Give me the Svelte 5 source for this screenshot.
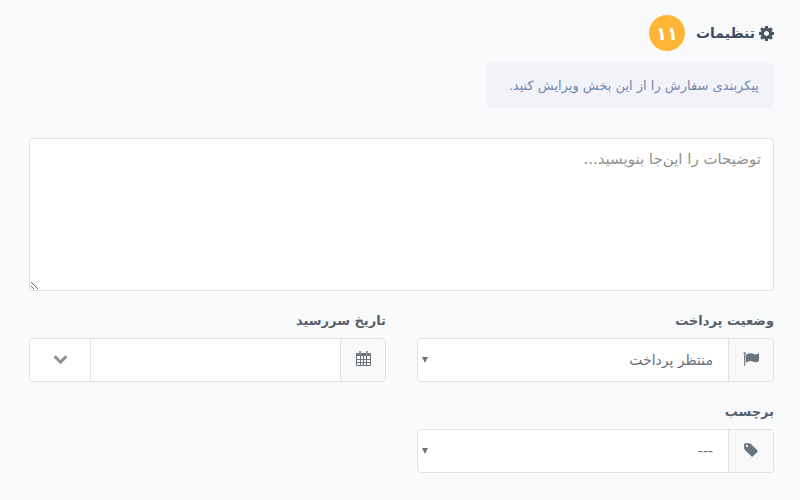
<script lang="ts">
	const icons = {
		cog: {
			box: '128 128 1536 1536',
			d: 'M1152 896q0-106-75-181t-181-75-181 75-75 181 75 181 181 75 181-75 75-181zm512-109v222q0 12-8 23t-20 13l-185 28q-19 54-39 91 35 50 107 138 10 12 10 25t-9 23q-27 37-99 108t-94 71q-12 0-26-9l-138-108q-44 23-91 38-16 136-29 186-7 28-36 28h-222q-14 0-24.5-8.5t-11.5-21.5l-28-184q-49-16-90-37l-141 107q-10 9-25 9-14 0-25-11-126-114-165-168-7-10-7-23 0-12 8-23 15-21 51-66.5t54-70.5q-27-50-41-99l-183-27q-13-2-21-12.5t-8-23.5v-222q0-12 8-23t19-13l186-28q14-46 39-92-40-57-107-138-10-12-10-24 0-10 9-23 26-36 98.5-107.5t94.5-71.5q13 0 26 10l138 107q44-23 91-38 16-136 29-186 7-28 36-28h222q14 0 24.5 8.5t11.5 21.5l28 184q49 16 90 37l142-107q9-9 24-9 13 0 25 10 129 119 165 170 7 8 7 22 0 12-8 23-15 21-51 66.5t-54 70.5q26 50 41 98l183 28q13 2 21 12.5t8 23.5z'
		},
		chevron: {
			box: '0 0 1792 1792',
			d: 'M1683 808l-742 741q-19 19-45 19t-45-19l-742-741q-19-19-19-45.5t19-45.5l166-165q19-19 45-19t45 19l531 531 531-531q19-19 45-19t45 19l166 165q19 19 19 45.5t-19 45.5z'
		},
		flag: {
			box: '0 0 1792 1792',
			d: 'M320 256q0 72-64 110v1266q0 13-9.5 22.5t-22.5 9.5h-64q-13 0-22.5-9.5t-9.5-22.5v-1266q-64-38-64-110 0-53 37.5-90.5t90.5-37.5 90.5 37.5 37.5 90.5zm1472 64v763q0 25-12.5 38.5t-39.5 27.5q-215 116-369 116-61 0-123.5-22t-108.5-48-115.5-48-142.5-22q-192 0-464 146-17 9-33 9-26 0-45-19t-19-45v-742q0-32 31-55 21-14 79-43 236-120 421-120 107 0 200 29t219 88q38 19 88 19 54 0 117.5-21t110-47 88-47 54.5-21q26 0 45 19t19 45z'
		},
		// drawn on a 15px grid so the day cells stay crisp
		calendar: {
			box: '0 0 15 15',
			d: 'M1 2h2V1q0-1 1-1t1 1v1h5V1q0-1 1-1t1 1v1h2q1 0 1 1v11q0 1-1 1H1q-1 0-1-1V3q0-1 1-1zM3.7 1v2.6h.6V1zM10.7 1v2.6h.6V1zM1 5v3h3V5zM5 5v3h2V5zM8 5v3h2V5zM11 5v3h3V5zM1 9v2h3V9zM5 9v2h2V9zM8 9v2h2V9zM11 9v2h3V9zM1 12v2h3v-2zM5 12v2h2v-2zM8 12v2h2v-2zM11 12v2h3v-2z'
		},
		tag: {
			box: '0 0 1792 1792',
			d: 'M576 448q0-53-37.5-90.5t-90.5-37.5-90.5 37.5-37.5 90.5 37.5 90.5 90.5 37.5 90.5-37.5 37.5-90.5zm1067 576q0 53-37 90l-491 492q-39 37-91 37-53 0-90-37l-715-716q-38-37-64.5-101t-26.5-117v-416q0-52 38-90t90-38h416q53 0 117 26.5t102 64.5l715 714q37 39 37 91z'
		}
	};
</script>

{#snippet icon(name: keyof typeof icons)}
	<svg class="icon icon-{name}" viewBox={icons[name].box} aria-hidden="true">
		<path fill-rule="evenodd" d={icons[name].d} />
	</svg>
{/snippet}

{#snippet arrow()}
	<svg class="arrow" viewBox="0 0 6 6" aria-hidden="true"><path d="M0 0h6l-3 6z" /></svg>
{/snippet}

<main class="settings" dir="rtl" lang="fa">
	<header class="head">
		<h1 class="title">{@render icon('cog')} تنظیمات</h1>
		<span class="badge">۱۱</span>
	</header>

	<p class="hint">پیکربندی سفارش را از این بخش ویرایش کنید.</p>

	<form>
		<textarea class="notes" aria-label="توضیحات" placeholder="توضیحات را این‌جا بنویسید..."></textarea>

		<div class="fields">
			<div class="field">
				<label for="status">وضعیت پرداخت</label>
				<div class="group">
					<span class="addon">{@render icon('flag')}</span>
					<div class="select">
						<select id="status">
							<option>منتظر پرداخت</option>
						</select>
						{@render arrow()}
					</div>
				</div>
			</div>

			<div class="field">
				<label for="due">تاریخ سررسید</label>
				<div class="group">
					<span class="addon">{@render icon('calendar')}</span>
					<input id="due" type="text" />
					<button class="toggle" type="button" aria-label="تاریخ سررسید">
						{@render icon('chevron')}
					</button>
				</div>
			</div>

			<div class="field">
				<label for="tag">برچسب</label>
				<div class="group">
					<span class="addon">{@render icon('tag')}</span>
					<div class="select">
						<select id="tag">
							<option>---</option>
						</select>
						{@render arrow()}
					</div>
				</div>
			</div>
		</div>
	</form>
</main>

<style>
	:global(body) {
		margin: 0;
		background: #f9fafc;
	}

	.settings,
	.settings * {
		box-sizing: border-box;
	}

	.settings {
		padding: 15px 26px 27px 29px;
		font-family: 'DejaVu Sans', sans-serif;
		font-size: 14px;
		color: #495057;
	}

	.icon {
		display: block;
		width: 16px;
		height: 16px;
		fill: #6c757d;
	}

	.head {
		display: flex;
		align-items: center;
		gap: 11px;
		height: 36px;
	}

	.title {
		display: flex;
		align-items: center;
		gap: 4px;
		margin: 0;
		font-size: 14px;
		font-weight: 700;
		line-height: 24px;
		color: #414d5f;
	}

	.icon-cog,
	.icon-calendar {
		width: 15px;
		height: 15px;
	}

	.icon-cog {
		fill: #485465;
	}

	.badge {
		display: flex;
		align-items: center;
		justify-content: center;
		width: 36px;
		height: 36px;
		border-radius: 50%;
		background: #ffb636;
		color: #fff;
		font-size: 18px;
		font-weight: 700;
	}

	.hint {
		width: fit-content;
		margin: 12px 0 30px;
		padding: 0 15px 0 22px;
		border-radius: 3px;
		background: #f2f3f9;
		color: #7386ad;
		font-size: 13px;
		line-height: 45px;
	}

	.notes {
		display: block;
		width: 100%;
		height: 153px;
		padding: 8px 12px;
		border: 1px solid #dee0e3;
		border-radius: 4px;
		background: #fff;
		color: #495057;
		font: inherit;
		font-size: 15px;
		line-height: 24px;
		resize: vertical;
	}

	.notes::placeholder {
		color: #919191;
		opacity: 1;
	}

	.fields {
		display: grid;
		grid-template-columns: 1fr 1fr;
		gap: 18px 31px;
		margin-top: 18px;
	}

	label {
		display: block;
		margin-bottom: 5px;
		font-size: 13px;
		font-weight: 700;
		line-height: 24px;
		color: #555e69;
	}

	.group {
		display: flex;
		height: 44px;
		border: 1px solid #dfe1e4;
		border-radius: 4px;
		background: #fff;
		overflow: hidden;
	}

	.addon {
		display: flex;
		flex: none;
		align-items: center;
		justify-content: center;
		width: 45px;
		padding-bottom: 3px;
		border-left: 1px solid #dfe1e4;
		background: #f8f8f8;
	}

	.select {
		position: relative;
		flex: 1;
	}

	select,
	input {
		width: 100%;
		height: 100%;
		padding: 0 15px;
		border: 0;
		background: transparent;
		color: #697079;
		font: inherit;
		appearance: none;
	}

	input {
		flex: 1;
		min-width: 0;
	}

	.arrow {
		position: absolute;
		top: 18px;
		left: 4px;
		width: 6px;
		height: 6px;
		fill: #6c757d;
		pointer-events: none;
	}

	.toggle {
		display: flex;
		flex: none;
		align-items: center;
		justify-content: center;
		width: 61px;
		padding: 0 0 4px;
		border: 0;
		border-right: 1px solid #dfe1e4;
		background: transparent;
	}

	.icon-chevron {
		width: 15px;
		height: 15px;
		fill: #919499;
	}
</style>
